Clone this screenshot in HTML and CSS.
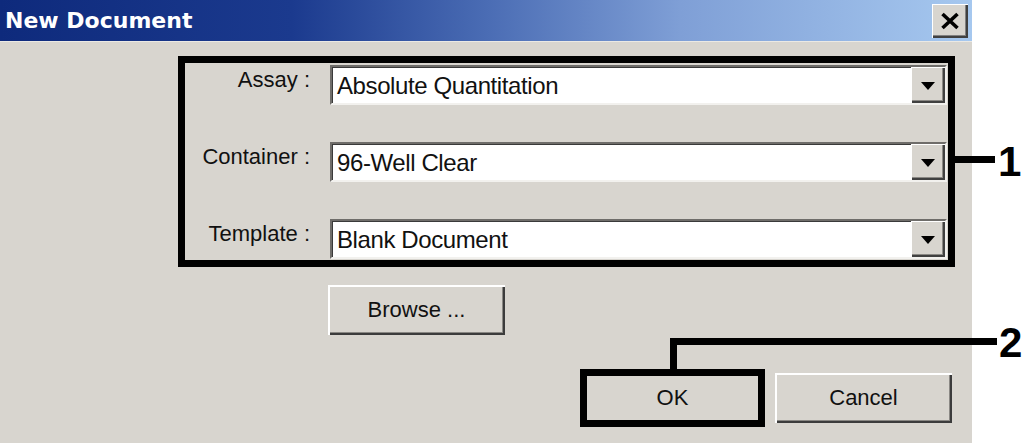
FILE: index.html
```html
<!DOCTYPE html>
<html>
<head>
<meta charset="utf-8">
<title>New Document</title>
<link rel="stylesheet" href="styles.css">
</head>
<body>
<div class="page">
  <div class="dialog">
    <div class="titlebar">
      <span class="title">New Document</span>
      <button class="close" aria-label="Close">
        <svg width="20" height="18" viewBox="0 0 20 18"><path d="M2.5 2 L17.5 16 M17.5 2 L2.5 16" stroke="#000" stroke-width="3.6" fill="none"/></svg>
      </button>
    </div>
    <div class="body">
      <div class="group">
        <div class="label">Assay :</div>
        <div class="combo"><span class="value">Absolute Quantitation</span><span class="drop"><svg width="14" height="8" viewBox="0 0 14 8"><polygon points="0,0 14,0 7,8" fill="#000"/></svg></span></div>
        <div class="label">Container :</div>
        <div class="combo"><span class="value">96-Well Clear</span><span class="drop"><svg width="14" height="8" viewBox="0 0 14 8"><polygon points="0,0 14,0 7,8" fill="#000"/></svg></span></div>
        <div class="label">Template :</div>
        <div class="combo"><span class="value">Blank Document</span><span class="drop"><svg width="14" height="8" viewBox="0 0 14 8"><polygon points="0,0 14,0 7,8" fill="#000"/></svg></span></div>
      </div>
      <div class="browse-row"><button class="btn">Browse ...</button></div>
      <div class="actions">
        <button class="btn ok">OK</button>
        <button class="btn">Cancel</button>
      </div>
    </div>
  </div>
  <div class="callout-line line-1"></div>
  <div class="callout-num num-1">1</div>
  <div class="callout-elbow"></div>
  <div class="callout-num num-2">2</div>
</div>
</body>
</html>
```

FILE: styles.css
```css
* { box-sizing: border-box; }
html, body { margin: 0; padding: 0; background: #fff; }
.page {
  position: relative;
  width: 1023px;
  height: 443px;
  overflow: hidden;
  font-family: "Liberation Sans", Arial, sans-serif;
}
.dialog {
  width: 972px;
  height: 443px;
  background: #d8d5cf;
  display: flex;
  flex-direction: column;
}
.titlebar {
  height: 42px;
  flex: none;
  display: flex;
  align-items: center;
  justify-content: space-between;
  padding: 0 4px 0 5px;
  background: linear-gradient(to right, #0e2a7c 0%, #1b3a8e 30%, #4a6cb4 50%, #7f9fd6 70%, #a6c8ef 100%);
  border-bottom: 1px solid #ebe9e4;
}
.title {
  color: #fff;
  font-family: "DejaVu Sans", Verdana, sans-serif;
  font-weight: bold;
  font-size: 22px;
  line-height: 26px;
}
.close {
  width: 36px;
  height: 34px;
  padding: 0;
  margin: 0;
  border: none;
  background: #d8d5cf;
  box-shadow: inset 1px 1px #fff, inset -2px -2px #404040, inset -3px -3px #808080;
  display: flex;
  align-items: center;
  justify-content: center;
}
.close svg { display: block; margin-left: -1px; }
.body {
  flex: 1;
  display: flex;
  flex-direction: column;
  padding-top: 14px;
}
.group {
  margin-left: 178px;
  width: 777px;
  border: 7px solid #000;
  padding: 2px 1px 1px 0;
  display: grid;
  grid-template-columns: 125px 1fr;
  column-gap: 20px;
  grid-auto-rows: 40px;
  row-gap: 37px;
}
.label {
  text-align: right;
  font-size: 22px;
  line-height: 26px;
  color: #111;
  padding-top: 2px;
  white-space: nowrap;
}
.combo {
  height: 40px;
  background: #fff;
  border: 2px solid;
  border-color: #6f6d6a #f2f1ee #f2f1ee #6f6d6a;
  box-shadow: inset 1px 1px #3a3a3a;
  display: flex;
  align-items: center;
}
.value {
  flex: 1;
  padding-left: 5px;
  padding-top: 1px;
  font-size: 24px;
  letter-spacing: -0.4px;
  color: #111;
  white-space: nowrap;
}
.drop {
  width: 34px;
  height: 100%;
  background: #d8d5cf;
  box-shadow: inset 1px 1px #fff, inset -2px -2px #404040, inset -3px -3px #8a8884;
  display: flex;
  align-items: center;
  justify-content: center;
}
.drop svg { display: block; margin-top: 1px; }
.browse-row {
  margin-top: 18px;
  padding-left: 328px;
  display: flex;
}
.btn {
  width: 177px;
  height: 50px;
  padding: 0;
  margin: 0;
  border: none;
  background: #d8d5cf;
  font-family: "Liberation Sans", Arial, sans-serif;
  font-size: 22px;
  color: #111;
  box-shadow: inset 2px 2px #fff, inset -2px -2px #3c3c3c, inset -3px -3px #8a8884;
}
.actions {
  margin-top: 38px;
  display: flex;
  justify-content: flex-end;
  gap: 14px;
  padding-right: 20px;
}
.ok {
  outline: 7px solid #000;
  outline-offset: -3px;
}
.callout-line {
  position: absolute;
  background: #000;
}
.line-1 {
  left: 955px;
  top: 156px;
  width: 40px;
  height: 7px;
}
.callout-elbow {
  position: absolute;
  left: 670px;
  top: 338px;
  width: 327px;
  height: 32px;
  border-top: 7px solid #000;
  border-left: 7px solid #000;
}
.callout-num {
  position: absolute;
  font-family: "Liberation Sans", Arial, sans-serif;
  font-weight: bold;
  font-size: 42px;
  line-height: 42px;
  color: #000;
}
.num-1 { left: 998px; top: 141px; }
.num-2 { left: 999px; top: 322px; }
```
